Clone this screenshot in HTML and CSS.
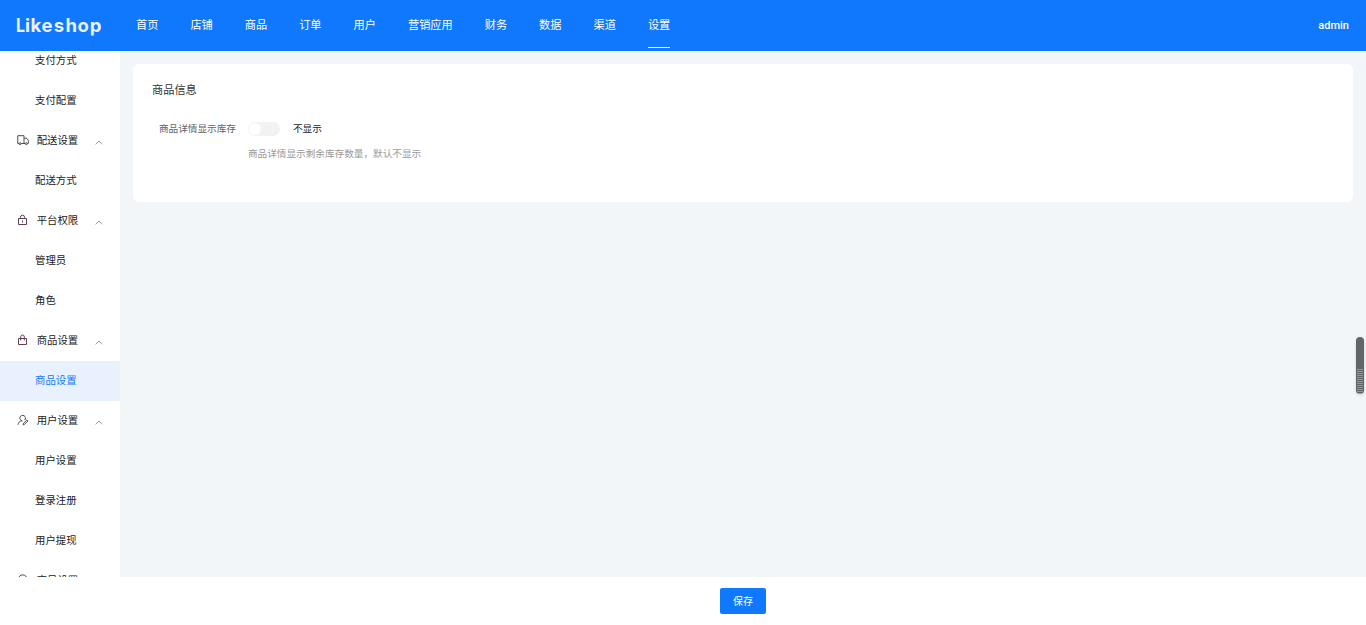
FILE: index.html
```html
<!DOCTYPE html>
<html lang="zh-CN">
<head>
<meta charset="utf-8">
<title>likeshop</title>
<link rel="stylesheet" href="styles.css">
</head>
<body>
<div class="app">
  <header class="header">
    <div class="logo">
      <svg class="logo-svg" width="90" height="26" viewBox="0 0 90 26" role="img" aria-label="Likeshop"><text class="logo-text" y="19"><tspan x="1" textLength="9" lengthAdjust="spacingAndGlyphs">L</tspan><tspan x="10 15.4 26.5 38.7 50.6 62.4 74.7">ikeshop</tspan></text></svg>
    </div>
    <nav class="nav">
      <a class="nav-item">首页</a><a class="nav-item">店铺</a><a class="nav-item">商品</a><a class="nav-item">订单</a><a class="nav-item">用户</a><a class="nav-item">营销应用</a><a class="nav-item">财务</a><a class="nav-item">数据</a><a class="nav-item">渠道</a><a class="nav-item nav-active">设置</a>
    </nav>
    <div class="account">admin</div>
  </header>
  <div class="body">
    <aside class="sidebar">
      <div class="menu-item first">支付方式</div>
      <div class="menu-item">支付配置</div>
      <div class="menu-group">
        <svg class="icon" viewBox="0 0 12 12"><path d="M2 9.5H.8V1.7h6.2v7.8H4.2M7 4.2h2.5l1.8 2v3.3h-.9M7 9.5h1.2"/><circle cx="3.1" cy="9.7" r="1"/><circle cx="9.3" cy="9.7" r="1"/></svg>
        <span class="group-name">配送设置</span>
        <svg class="arrow" viewBox="0 0 8 5"><path d="M.6 4.4 4 1l3.4 3.4"/></svg>
      </div>
      <div class="menu-item">配送方式</div>
      <div class="menu-group">
        <svg class="icon" viewBox="0 0 12 12"><path class="tint" d="M1.5 4.5h8v6h-8zM3.4 4.5V3.3a2.1 2.1 0 0 1 4.2 0v1.2M5.5 6.5v2"/></svg>
        <span class="group-name">平台权限</span>
        <svg class="arrow" viewBox="0 0 8 5"><path d="M.6 4.4 4 1l3.4 3.4"/></svg>
      </div>
      <div class="menu-item">管理员</div>
      <div class="menu-item">角色</div>
      <div class="menu-group">
        <svg class="icon" viewBox="0 0 12 12"><path class="tint" d="M1.5 4.5h8v6h-8zM3.7 6.5V2.8a1.8 1.8 0 0 1 3.6 0v3.7"/></svg>
        <span class="group-name">商品设置</span>
        <svg class="arrow" viewBox="0 0 8 5"><path d="M.6 4.4 4 1l3.4 3.4"/></svg>
      </div>
      <div class="menu-item menu-active">商品设置</div>
      <div class="menu-group">
        <svg class="icon" viewBox="0 0 12 12"><path d="M1 10.7C1.3 8.5 2.7 7.1 4.8 6.8M5.5 6.9a2.8 2.8 0 1 1 2.1-.8M6.2 10.9l.3-1.7 3.5-3.3 1 1-3.5 3.4z"/></svg>
        <span class="group-name">用户设置</span>
        <svg class="arrow" viewBox="0 0 8 5"><path d="M.6 4.4 4 1l3.4 3.4"/></svg>
      </div>
      <div class="menu-item">用户设置</div>
      <div class="menu-item">登录注册</div>
      <div class="menu-item">用户提现</div>
      <div class="menu-group">
        <svg class="icon" viewBox="0 0 12 12"><circle cx="5.8" cy="5.4" r="4.5"/></svg>
        <span class="group-name">交易设置</span>
      </div>
    </aside>
    <main class="main">
      <section class="card">
        <h1 class="card-title">商品信息</h1>
        <div class="form-row">
          <label class="form-label">商品详情显示库存</label>
          <div class="form-content">
            <div class="switch-row"><span class="switch"></span><span class="switch-text">不显示</span></div>
            <p class="hint">商品详情显示剩余库存数量，默认不显示</p>
          </div>
        </div>
      </section>
    </main>
  </div>
  <footer class="footer"><button class="save">保存</button></footer>
  <div class="gauge"></div>
</div>
</body>
</html>
```

FILE: styles.css
```css
* { box-sizing: border-box; }
body {
  margin: 0;
  font-family: "Liberation Sans", "Noto Sans CJK SC", sans-serif;
  color: #222;
  overflow: hidden;
}
.app { height: 625px; display: flex; flex-direction: column; position: relative; }
.header {
  height: 51px; flex: none; display: flex; align-items: center;
  background: #1078fd; color: #fff; padding: 0 17px 0 15px;
}
.logo { width: 121px; height: 26px; }
.logo-svg { display: block; }
.logo-text { font-family: Inter, sans-serif; font-size: 18.5px; font-weight: 700; fill: #e9f2ff; }
.nav { display: flex; gap: 32px; height: 51px; }
.nav-item { font-size: 11.2px; line-height: 51px; height: 48px; white-space: nowrap; }
.nav-active { border-bottom: 1px solid #fff; }
.account { margin-left: auto; font-family: Roboto, sans-serif; font-size: 11px; font-weight: 500; }
.body { flex: 1; min-height: 0; display: flex; background: #f2f6f9; }
.sidebar { width: 120px; background: #fff; overflow: hidden; font-size: 10.4px; }
.menu-item { height: 40px; line-height: 39px; padding-left: 35px; }
.first { margin-top: -10px; }
.menu-active { background: #e9f1ff; color: #1078fd; }
.menu-group { height: 40px; display: flex; align-items: center; padding: 0 0 2px 17px; line-height: 38px; }
.icon { width: 12px; height: 12px; fill: none; stroke: #444; stroke-width: .95; margin-right: 7.7px; flex: none; }
.tint { stroke: #55384f; }
.group-name { width: 58px; padding-top: 2px; }
.arrow { width: 8px; height: 5px; margin-top: 5px; fill: none; stroke: #999; stroke-width: .9; }
.main { flex: 1; padding: 13px 13px 0; }
.card { height: 138px; background: #fff; border-radius: 6px; padding: 16px 19px; }
.card-title { margin: 0; font-size: 11.2px; font-weight: 400; line-height: 20px; color: #333; }
.form-row { display: flex; margin-top: 19px; font-size: 9.65px; }
.form-label { width: 84px; margin-right: 12px; text-align: right; line-height: 20px; color: #606266; white-space: nowrap; }
.switch-row { display: flex; align-items: center; height: 20px; line-height: 18px; }
.switch { width: 32px; height: 14px; border-radius: 7px; background: #f2f2f2; padding: 1px; margin-right: 13px; }
.switch::before { content: ""; display: block; width: 12px; height: 12px; border-radius: 50%; background: #fff; }
.hint { margin: 5px 0 0; line-height: 20px; color: #999; white-space: nowrap; }
.footer { height: 48px; flex: none; background: #fff; padding: 11px 0 0 720px; }
.save {
  display: block; width: 46px; height: 26px; border: 0; border-radius: 2px; padding: 2px 0 0;
  background: #1078fd; color: #fff; font-family: inherit; font-size: 10px; line-height: 24px;
}
.gauge {
  position: absolute; left: 1356px; top: 337px; width: 8px; height: 57px; border-radius: 4px;
  background:
    linear-gradient(#636466, #636466) 0 0 / 100% 32px no-repeat,
    repeating-linear-gradient(#4cc46e 0 1px, #636466 1px 2px) 1px 0 / 6px 100% no-repeat,
    #636466;
  box-shadow: 0 1px 3px rgba(0, 0, 0, .15);
}
```
